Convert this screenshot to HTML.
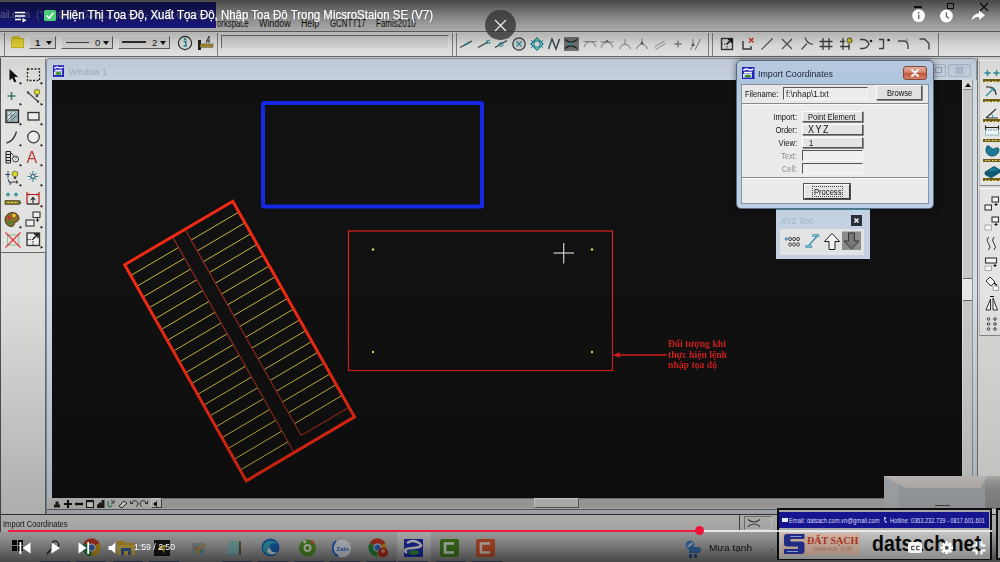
<!DOCTYPE html>
<html><head><meta charset="utf-8">
<style>
*{box-sizing:border-box;margin:0;padding:0}
html,body{width:1000px;height:562px;overflow:hidden;background:#c9c9c7;font-family:"Liberation Sans",sans-serif}
#root{position:relative;width:1000px;height:562px;overflow:hidden;background:#d6d6d4}
.abs{position:absolute}
#root div,#root span,#root svg{position:absolute}
#menubar{left:0;top:0;width:1000px;height:31px;background:#f0f0f0}
#titleblue{left:0;top:2px;width:216px;height:26px;background:#2424b4}
#toolbar{left:0;top:31px;width:1000px;height:26px;background:#f3f3f1;border-top:1px solid #7a7a7a;border-bottom:1px solid #6a6a6a;box-shadow:inset 0 1px 0 #fafafa}
#leftpal{left:0;top:59px;width:46px;height:456px;background:#dededc;border-right:1px solid #707070}
#win{left:46px;top:58px;width:931px;height:456px;background:#cbd5e2;border:1px solid #8a96a4;border-radius:4px 4px 0 0}
#canvas{left:52px;top:80px;width:910px;height:417.500px;background:#111111}
#vscroll{left:962px;top:80px;width:11px;height:417.500px;background:linear-gradient(#c8c8c8 0,#c8c8c8 220px,#e0e0e0 400px);border-left:1px solid #e8e8e8;border-right:1px solid #999}
#hscroll{left:52px;top:495px;width:921px;height:13px;background:#cfcfcf;border-top:1px solid #888}
#rightpal{left:976px;top:58px;width:24px;height:440px;background:#e0e0de;border-left:1px solid #999}
#status{left:0;top:514.500px;width:1000px;height:18px;background:#dadad8}
#taskbar{left:0;top:532px;width:1000px;height:30px;background:linear-gradient(#cdcdcd,#bfbfbf 10px,#a7a7a7 20px,#909090)}
#topgrad{left:0;top:0;width:1000px;height:110px;background:linear-gradient(to bottom,rgba(0,0,0,.7) 0,rgba(0,0,0,.58) 8px,rgba(0,0,0,.47) 15px,rgba(0,0,0,.38) 22px,rgba(0,0,0,.3) 30px,rgba(0,0,0,.12) 45px,rgba(0,0,0,.06) 60px,rgba(0,0,0,.02) 80px,rgba(0,0,0,0) 110px)}
#botgrad{left:0;top:290px;width:1000px;height:272px;background:linear-gradient(to bottom,rgba(0,0,0,0) 0px,rgba(0,0,0,0.036) 40px,rgba(0,0,0,0.1) 110px,rgba(0,0,0,0.153) 160px,rgba(0,0,0,0.207) 210px,rgba(0,0,0,0.225) 230px,rgba(0,0,0,0.27) 245px,rgba(0,0,0,0.36) 258px,rgba(0,0,0,0.46) 268px,rgba(0,0,0,0.5) 272px)}
/* dialog */
#dlg{left:736px;top:60px;width:198px;height:149px;background:linear-gradient(#c3d6ec,#aec6e2 24px,#b7cde6 25px,#bcd0e8);border:1px solid #5b6a80;border-radius:5px;box-shadow:0 0 6px rgba(0,0,0,.5)}
#dlgc{left:741px;top:84px;width:188px;height:120px;background:#ebebeb;border:1px solid #8894a4}
.lbl{font-size:9.5px;color:#111;white-space:nowrap;line-height:11px}
.btn{background:#e4e4e4;border:1px solid;border-color:#fff #555 #555 #fff;box-shadow:1px 1px 0 #888;font-size:9.5px;line-height:10px;color:#111;white-space:nowrap}
.inp{background:#efefef;border:1px solid;border-color:#555 #f8f8f8 #f8f8f8 #555;font-size:9.5px;line-height:10px;color:#222;white-space:nowrap}
.sx{transform:scaleX(.8);transform-origin:0 0;white-space:nowrap}
.sxr{transform:scaleX(.8);transform-origin:100% 0;white-space:nowrap}
.mn{font-size:10px;color:#1a1a1a;white-space:nowrap;transform-origin:0 0;line-height:12px}
.cmb{background:#e6e6e4;border:1px solid;border-color:#fafafa #666 #666 #fafafa}
.cbt{font-size:9.5px;color:#222;line-height:11px}
.tri{width:0;height:0;border-left:3.5px solid transparent;border-right:3.5px solid transparent;border-top:4px solid #111}
</style></head><body>
<div id="root">
<div id="app" style="left:0;top:0;width:1000px;height:562px;filter:blur(.55px)">
 <div id="menubar"></div>
<span class="mn" style="left:216.5px;top:18px;transform:scaleX(0.776)">orkspace</span>
<span class="mn" style="left:259px;top:18px;transform:scaleX(0.888)">Window</span>
<span class="mn" style="left:301.4px;top:18px;transform:scaleX(0.875)">Help</span>
<span class="mn" style="left:329.6px;top:18px;transform:scaleX(0.784)">GCNTT17</span>
<span class="mn" style="left:376.4px;top:18px;transform:scaleX(0.801)">Famis2010</span>
<div style="left:914px;top:6px;width:8px;height:2px;background:#222"></div>
<div style="left:947px;top:3px;width:7px;height:6px;border:1.5px solid #222"></div>
<svg style="left:979px;top:2px" width="10" height="10" viewBox="0 0 10 10"><path d="M1 1l8 8M9 1l-8 8" stroke="#222" stroke-width="1.3"/></svg>
<div id="titleblue"></div>
<span style="left:0;top:8px;font-size:11px;color:#c8ccf4;opacity:.85;white-space:nowrap;transform:scaleX(.86);transform-origin:0 0">ail.com</span>
<span style="left:36px;top:8px;font-size:11px;color:#c0c4f0;opacity:.6;white-space:nowrap;transform:scaleX(.9);transform-origin:0 0">(* Hotline: 0363.232.739 - 0817.601.601</span>
<div id="toolbar"></div>
<div style="left:217px;top:33px;width:2px;height:23px;border-left:1px solid #8a8a8a;border-right:1px solid #f6f6f6"></div>
<div style="left:452px;top:33px;width:2px;height:23px;border-left:1px solid #8a8a8a;border-right:1px solid #f6f6f6"></div>
<div style="left:708px;top:33px;width:2px;height:23px;border-left:1px solid #8a8a8a;border-right:1px solid #f6f6f6"></div>
<div style="left:938px;top:33px;width:2px;height:23px;border-left:1px solid #8a8a8a;border-right:1px solid #f6f6f6"></div>
<div style="left:456px;top:33px;width:2px;height:23px;border-left:1px solid #8a8a8a;border-right:1px solid #f6f6f6"></div>
<div style="left:712px;top:33px;width:2px;height:23px;border-left:1px solid #8a8a8a;border-right:1px solid #f6f6f6"></div>
<div style="left:4px;top:33px;width:2px;height:23px;border-left:1px solid #8a8a8a;border-right:1px solid #f6f6f6"></div>
<div style="left:10.500px;top:37.500px;width:13px;height:10px;background:#f2e23a;border:1px solid #d4c428"></div><div style="left:11.500px;top:36px;width:8px;height:2px;background:#e6d630"></div>
<div class="cmb" style="left:29px;top:36px;width:27px;height:13px"></div><span class="cbt" style="left:35px;top:37px;font-weight:bold">1</span><div class="tri" style="left:46px;top:41px"></div>
<div class="cmb" style="left:61px;top:36px;width:52px;height:13px"></div><div style="left:66px;top:42px;width:23px;height:1px;background:#444"></div><span class="cbt" style="left:95px;top:37px">0</span><div class="tri" style="left:103px;top:41px"></div>
<div class="cmb" style="left:118px;top:36px;width:52px;height:13px"></div><div style="left:122px;top:41px;width:24px;height:2px;background:#333"></div><span class="cbt" style="left:152px;top:37px">2</span><div class="tri" style="left:160px;top:41px"></div>
<svg style="left:177px;top:35px" width="16" height="16" viewBox="0 0 16 16"><circle cx="8" cy="8" r="6.6" fill="#f2f2f2" stroke="#333" stroke-width="1.2"/><path d="M6.6 6.4h2.2v4.6h1.2M6.4 11h3.6" stroke="#1a9a9a" stroke-width="1.5" fill="none"/><circle cx="8" cy="4.2" r="1.1" fill="#1a9a9a"/></svg>
<svg style="left:196px;top:34px" width="18" height="18" viewBox="0 0 18 18"><rect x="2" y="6" width="3" height="10" fill="#222"/><rect x="4" y="10" width="13" height="3.2" fill="#b89a30" stroke="#554" stroke-width=".6"/><path d="M10 9l3-7v7M10 7h4" stroke="#444" stroke-width="1" fill="none"/></svg>
<div style="left:221px;top:35px;width:228px;height:14px;background:#e9e9e7;border:1px solid;border-color:#777 #f8f8f8 #f8f8f8 #777"></div>
<svg style="left:457.0px;top:35.2px" width="18" height="18" viewBox="-9 -9 18 18"><path d="M-6 3.5L6-3" stroke="#3a4650" stroke-width="1.3"/><path d="M-1 2l1-3 1.5 1.5 1-3" stroke="#2a9aa6" stroke-width="1" fill="none"/></svg>
<svg style="left:475.0px;top:35.2px" width="18" height="18" viewBox="-9 -9 18 18"><path d="M-6 3.5L4-2" stroke="#3a4650" stroke-width="1.3"/><path d="M2-2.8l4-1M3-0.8l3.5-.6" stroke="#2a9aa6" stroke-width="1.1" fill="none"/></svg>
<svg style="left:492.0px;top:35.2px" width="18" height="18" viewBox="-9 -9 18 18"><path d="M-6 3.5L6-3.5" stroke="#3a4650" stroke-width="1.3"/><circle cx="0" cy="0.5" r="2" stroke="#2a9aa6" stroke-width="1" fill="none"/></svg>
<svg style="left:510.2px;top:35.2px" width="18" height="18" viewBox="-9 -9 18 18"><circle cx="0" cy="0" r="6.2" stroke="#3a4650" stroke-width="1.3" fill="#e4e4e4"/><path d="M-2.5-2.5l5 5M2.5-2.5l-5 5" stroke="#2a9aa6" stroke-width="1.2"/></svg>
<svg style="left:527.6px;top:35.2px" width="18" height="18" viewBox="-9 -9 18 18"><path d="M0-6L6 0 0 6-6 0z" stroke="#2a9aa6" stroke-width="1.4" fill="none"/><circle cx="0" cy="0" r="3.2" stroke="#2a9aa6" stroke-width="1.3" fill="none"/><path d="M-6-4l2 2M6-4l-2 2M-6 4l2-2M6 4l-2-2" stroke="#2a9aa6" stroke-width="1"/></svg>
<svg style="left:545.0px;top:35.2px" width="18" height="18" viewBox="-9 -9 18 18"><path d="M-5.500 5L-2-5 2 5 5.500-5" stroke="#3a4650" stroke-width="1.4" fill="none"/><path d="M-4.500 2l2-5.500" stroke="#2a9aa6" stroke-width="1"/></svg>
<div style="left:563.500px;top:36.500px;width:15.500px;height:14px;background:#7d7d7d"></div>
<svg style="left:561.5px;top:35.2px" width="18" height="18" viewBox="-9 -9 18 18"><path d="M-6-4.500Q0 1 6-4.500M-6 4.500Q0-1 6 4.500" stroke="#222" stroke-width="1.4" fill="none"/><rect x="-1.500" y="-1.500" width="3" height="3" fill="#2a9aa6"/></svg>
<svg style="left:581.0px;top:35.2px" width="18" height="18" viewBox="-9 -9 18 18"><path d="M-6.500-2.500h13M-6 3q2-5 6-5.500q4 .5 6 5.500" stroke="#969696" stroke-width="1.1" fill="none"/></svg>
<svg style="left:598.0px;top:35.2px" width="18" height="18" viewBox="-9 -9 18 18"><path d="M-6.500-2h13M-6 3.500q2-5 6-5.500q4 .5 6 5.500" stroke="#969696" stroke-width="1.100" fill="none"/><path d="M-2-2l2-2.500 2 2.500z" fill="#666"/></svg>
<svg style="left:616.0px;top:35.2px" width="18" height="18" viewBox="-9 -9 18 18"><path d="M0-5v5M-5.500 5q1-4 5.500-5q4.500 1 5.500 5" stroke="#969696" stroke-width="1.100" fill="none"/></svg>
<svg style="left:632.6px;top:35.2px" width="18" height="18" viewBox="-9 -9 18 18"><path d="M0-5.500v4M-5.500 5q1-4 5.500-5q4.500 1 5.500 5" stroke="#969696" stroke-width="1.100" fill="none"/><path d="M-2 0l2-3 2 3z" fill="#666"/></svg>
<svg style="left:651.0px;top:35.2px" width="18" height="18" viewBox="-9 -9 18 18"><path d="M-5.500 3l10-6M-4.500 5.500l10-6" stroke="#969696" stroke-width="1"/></svg>
<svg style="left:668.5px;top:35.2px" width="18" height="18" viewBox="-9 -9 18 18"><path d="M-3.500 0h7M0-3.500v7" stroke="#858585" stroke-width="1.300"/></svg>
<svg style="left:686.0px;top:35.2px" width="18" height="18" viewBox="-9 -9 18 18"><path d="M-4.500 6l2.500-5v-6M0 6l5.500-11" stroke="#969696" stroke-width="1.100" fill="none"/><path d="M-4 2l2-3.500 2 3.500z" fill="#666"/></svg>
<svg style="left:718.3px;top:35.2px" width="18" height="18" viewBox="-9 -9 18 18"><rect x="-5.500" y="-5.500" width="11" height="11" stroke="#3a3a3a" stroke-width="1.400" fill="#e8e8e8"/><path d="M-5.500 0h5.500v5.500" stroke="#3a3a3a" stroke-width="1" fill="none" stroke-dasharray="1.500 1"/><path d="M0 0l4-4M1-4.500h3.500v3.500" stroke="#111" stroke-width="1.500" fill="none"/></svg>
<svg style="left:739.0px;top:35.2px" width="18" height="18" viewBox="-9 -9 18 18"><path d="M-5-3v8h8v-3" stroke="#3a3a3a" stroke-width="1.400" fill="none"/><path d="M1-6l4.500 4.500M5.500-6l-4.500 4.500" stroke="#e03030" stroke-width="1.300"/></svg>
<svg style="left:758.0px;top:35.2px" width="18" height="18" viewBox="-9 -9 18 18"><path d="M-5.500 5.500l11-11" stroke="#555" stroke-width="1.200"/></svg>
<svg style="left:778.0px;top:35.2px" width="18" height="18" viewBox="-9 -9 18 18"><path d="M-5-5l10 10M5-5l-10 10" stroke="#555" stroke-width="1.200"/></svg>
<svg style="left:797.6px;top:35.2px" width="18" height="18" viewBox="-9 -9 18 18"><path d="M-5.500 5.500l5.500-6M-2-6.500q2 6 8 7" stroke="#555" stroke-width="1.200" fill="none"/></svg>
<svg style="left:817.0px;top:35.2px" width="18" height="18" viewBox="-9 -9 18 18"><path d="M-3-6v12M3-6v12M-6.500-2.500h13M-6.500 2.500h13" stroke="#444" stroke-width="1.300"/></svg>
<svg style="left:838.0px;top:35.2px" width="18" height="18" viewBox="-9 -9 18 18"><path d="M-4-6v12M-7-2.500h5M-7 2.500h10M2 0v6" stroke="#444" stroke-width="1.300"/><circle cx="2.500" cy="-3.500" r="2.600" fill="#d8d820" stroke="#444" stroke-width=".8"/></svg>
<svg style="left:857.4px;top:35.2px" width="18" height="18" viewBox="-9 -9 18 18"><path d="M-6-4.500h3q4 0 6 4.500q-2 4.500-6 4.500h-3" stroke="#444" stroke-width="1.300" fill="none"/><circle cx="5" cy="-3" r="1.300" fill="#222"/></svg>
<svg style="left:876.0px;top:35.2px" width="18" height="18" viewBox="-9 -9 18 18"><path d="M-6-4.500h4.500v9h-4.500" stroke="#444" stroke-width="1.300" fill="none"/><circle cx="3.500" cy="-4" r="1.300" fill="#222"/></svg>
<svg style="left:896.4px;top:35.2px" width="18" height="18" viewBox="-9 -9 18 18"><path d="M-7-3h5q5 0 5 5v3" stroke="#555" stroke-width="1.400" fill="none"/><path d="M2-5.500v3M0.500-4h3" stroke="#aaa" stroke-width=".8"/></svg>
<svg style="left:916.7px;top:35.2px" width="18" height="18" viewBox="-9 -9 18 18"><path d="M-6.500-5h5l4.500 4.500v6" stroke="#555" stroke-width="1.500" fill="none"/></svg>

 <div id="leftpal"></div>
<div style="left:0;top:58px;width:46px;height:195px;background:#e2e2e0;border-top:1px solid #f8f8f8;border-bottom:1px solid #666;border-right:1px solid #8a8a8a;border-left:1px solid #aaa"></div>
<svg style="left:3.3px;top:66.4px" width="20" height="20" viewBox="-10 -10 20 20"><path d="M-3.500-7v11.500l2.800-2.600 2 4.600 2-1-2-4.500h3.800z" fill="#111"/><path d="M6.800 6.300l2 1-2 1z" fill="#111" stroke="#111" stroke-width=".4"/></svg>
<svg style="left:23.7px;top:66.4px" width="20" height="20" viewBox="-10 -10 20 20"><rect x="-6.500" y="-7" width="12" height="11.500" fill="none" stroke="#222" stroke-width="1.300" stroke-dasharray="2 1.500"/><path d="M6.800 6.300l2 1-2 1z" fill="#111" stroke="#111" stroke-width=".4"/></svg>
<svg style="left:3.3px;top:86.8px" width="20" height="20" viewBox="-10 -10 20 20"><path d="M-5.500-1h8M-1.500-5v8" stroke="#3a7a6a" stroke-width="1.500"/><path d="M6.800 6.300l2 1-2 1z" fill="#111" stroke="#111" stroke-width=".4"/></svg>
<svg style="left:23.7px;top:86.8px" width="20" height="20" viewBox="-10 -10 20 20"><path d="M-6-4.500l10 9" stroke="#445" stroke-width="1.200"/><circle cx="-6" cy="-4.500" r="1.200" fill="#445"/><circle cx="4" cy="4.500" r="1.200" fill="#445"/><circle cx="3" cy="-5" r="2.800" fill="#dcdc20" stroke="#554" stroke-width=".7"/><rect x="1.800" y="-2.200" width="2.400" height="2.200" fill="#444"/><path d="M6.800 6.300l2 1-2 1z" fill="#111" stroke="#111" stroke-width=".4"/></svg>
<svg style="left:3.3px;top:107.3px" width="20" height="20" viewBox="-10 -10 20 20"><rect x="-7" y="-7" width="12.500" height="12.500" fill="#9ab0b0" stroke="#222" stroke-width="1.300"/><path d="M-4 3v-7h7" stroke="#fff" stroke-width="1.200" fill="none"/><path d="M-6 4l9-9M-6 0l5-5M-2 4l6-6" stroke="#345" stroke-width=".7"/><path d="M6.800 6.300l2 1-2 1z" fill="#111" stroke="#111" stroke-width=".4"/></svg>
<svg style="left:23.7px;top:107.3px" width="20" height="20" viewBox="-10 -10 20 20"><rect x="-6" y="-4.500" width="11" height="7.500" fill="#ececec" stroke="#333" stroke-width="1.300"/><path d="M6.800 6.300l2 1-2 1z" fill="#111" stroke="#111" stroke-width=".4"/></svg>
<svg style="left:3.3px;top:127.7px" width="20" height="20" viewBox="-10 -10 20 20"><path d="M-6.500 5q7.500-2 10-11.500" stroke="#333" stroke-width="1.300" fill="none"/><path d="M6.800 6.300l2 1-2 1z" fill="#111" stroke="#111" stroke-width=".4"/></svg>
<svg style="left:23.7px;top:127.7px" width="20" height="20" viewBox="-10 -10 20 20"><circle cx="-.5" cy="-1" r="5.800" fill="#ececec" stroke="#333" stroke-width="1.200"/><path d="M6.800 6.300l2 1-2 1z" fill="#111" stroke="#111" stroke-width=".4"/></svg>
<svg style="left:3.3px;top:147.5px" width="20" height="20" viewBox="-10 -10 20 20"><path d="M-7-6.500h4.500v11.500h-4.500zM-7-3.500h4.500M-7-.5h4.500M-7 2.500h4.500" stroke="#222" stroke-width="1" fill="#ddd"/><path d="M-2.500-5.500l3 3" stroke="#222" stroke-width="1"/><circle cx="2.500" cy="1" r="3" fill="#f4f4f4" stroke="#222" stroke-width=".9"/><text x="1.300" y="2.800" font-size="4.500" font-family="Liberation Sans,sans-serif" fill="#222">?</text><path d="M6.800 6.300l2 1-2 1z" fill="#111" stroke="#111" stroke-width=".4"/></svg>
<svg style="left:23.7px;top:147.5px" width="20" height="20" viewBox="-10 -10 20 20"><text x="-7.500" y="5" font-size="16" font-family="Liberation Sans,sans-serif" fill="#b83a3a">A</text><path d="M6.800 6.300l2 1-2 1z" fill="#111" stroke="#111" stroke-width=".4"/></svg>
<svg style="left:3.3px;top:167.5px" width="20" height="20" viewBox="-10 -10 20 20"><path d="M-5-7v7M-8-3.500h5M-5 1q0 4 4 4M-3 7v-4" stroke="#345" stroke-width="1" fill="none" /><circle cx="2" cy="-4" r="2.800" fill="#dcdc20" stroke="#554" stroke-width=".7"/><rect x=".8" y="-1.200" width="2.400" height="2.200" fill="#444"/><path d="M-1 4h6M3 2.500l2 1.500-2 1.500" stroke="#222" stroke-width=".9" fill="none"/><path d="M6.800 6.300l2 1-2 1z" fill="#111" stroke="#111" stroke-width=".4"/></svg>
<svg style="left:23.7px;top:167.5px" width="20" height="20" viewBox="-10 -10 20 20"><path d="M-6.500-1.500h11M-1-7v11M-4.500-5l7 7M2.500-5l-7 7" stroke="#2a8a96" stroke-width="1"/><circle cx="-1" cy="-1.500" r="2" fill="#e8e8e8" stroke="#345" stroke-width="1"/><path d="M6.800 6.300l2 1-2 1z" fill="#111" stroke="#111" stroke-width=".4"/></svg>
<svg style="left:3.3px;top:188.7px" width="20" height="20" viewBox="-10 -10 20 20"><path d="M-7-4.500h4M-5-6.500v4M1-4.500h4M3-6.500v4" stroke="#2a8a96" stroke-width="1.300"/><rect x="-8" y="1.500" width="14.500" height="4" fill="#8a7a20" stroke="#443" stroke-width=".7"/><path d="M-5.500 3.500h2M-2 3.500h2M1.500 3.500h2" stroke="#e8e060" stroke-width="1"/><path d="M6.500 1.500l2 2-2 2z" fill="#443"/></svg>
<svg style="left:23.7px;top:188.7px" width="20" height="20" viewBox="-10 -10 20 20"><path d="M-7-7v12M5-7v12" stroke="#b02020" stroke-width="1.200"/><path d="M-7-4.500h12" stroke="#b02020" stroke-width="1"/><path d="M-7-4.500l2.500-1.300v2.600zM5-4.500l-2.500-1.300v2.600z" fill="#b02020"/><path d="M-7 5h12" stroke="#222" stroke-width="1.300"/><path d="M-1 4v-5M-3 1l2-2.500 2 2.500" stroke="#222" stroke-width="1.100" fill="none"/><path d="M6.800 6.300l2 1-2 1z" fill="#111" stroke="#111" stroke-width=".4"/></svg>
<svg style="left:3.3px;top:210.2px" width="20" height="20" viewBox="-10 -10 20 20"><path d="M-1-7.500c5 0 7 3 7 6s-3 3-4 4 0 4-4 4-6-4-6-7 3-7 7-7z" fill="#8a6a28" stroke="#332" stroke-width=".9"/><circle cx="-3.500" cy="-2.500" r="1.700" fill="#d03030"/><circle cx="1" cy="-4.500" r="1.700" fill="#e8d030"/><circle cx="-3" cy="2.500" r="1.900" fill="#3a8a3a"/><path d="M6.800 6.300l2 1-2 1z" fill="#111" stroke="#111" stroke-width=".4"/></svg>
<svg style="left:23.7px;top:210.2px" width="20" height="20" viewBox="-10 -10 20 20"><rect x="-1" y="-8" width="7" height="5.500" fill="#eee" stroke="#333" stroke-width="1.100"/><rect x="-8" y="0" width="8" height="6" fill="#eee" stroke="#333" stroke-width="1.100"/><path d="M3.500-2v3.500M2-0.500l1.500 2 1.500-2" stroke="#222" stroke-width="1" fill="none"/><path d="M6.800 6.300l2 1-2 1z" fill="#111" stroke="#111" stroke-width=".4"/></svg>
<svg style="left:3.3px;top:229.8px" width="20" height="20" viewBox="-10 -10 20 20"><rect x="-5.500" y="-5" width="11" height="10" fill="none" stroke="#9ac0a0" stroke-width="1.200"/><path d="M-7.500-7.500l15 15M7.500-7.500l-15 15" stroke="#e03a3a" stroke-width="1.300"/></svg>
<svg style="left:23.7px;top:229.8px" width="20" height="20" viewBox="-10 -10 20 20"><rect x="-7" y="-7" width="12.500" height="12.500" stroke="#333" stroke-width="1.300" fill="#ececec"/><path d="M-7-.5h6v6" stroke="#333" stroke-width="1" fill="none" stroke-dasharray="1.500 1"/><path d="M-1-1l4.500-4.500M0-6h4v4" stroke="#111" stroke-width="1.400" fill="none"/><path d="M6.800 6.300l2 1-2 1z" fill="#111" stroke="#111" stroke-width=".4"/></svg>

 <div id="win"></div>
 <div style="left:47px;top:80px;width:5px;height:429px;background:#d3dbe6"></div><div style="left:973px;top:80px;width:3.500px;height:429px;background:#d3dbe6"></div>
 <div id="canvas"></div>
 <svg id="draw" style="left:0;top:0" width="1000" height="562" viewBox="0 0 1000 562">
  <rect x="263" y="103" width="219" height="103.5" fill="none" stroke="#1428e6" stroke-width="4" rx="1"/>
<g stroke="#c9b93a" stroke-width="1" fill="none"><line x1="130.8" y1="275.5" x2="178.6" y2="247.4"/><line x1="191.1" y1="240.1" x2="238.9" y2="212.0"/><line x1="136.9" y1="286.3" x2="184.6" y2="258.2"/><line x1="197.2" y1="250.9" x2="245.0" y2="222.8"/><line x1="142.9" y1="297.1" x2="190.7" y2="269.0"/><line x1="203.3" y1="261.7" x2="251.1" y2="233.6"/><line x1="149.0" y1="307.9" x2="196.8" y2="279.8"/><line x1="209.4" y1="272.5" x2="257.1" y2="244.3"/><line x1="155.1" y1="318.8" x2="202.9" y2="290.6"/><line x1="215.4" y1="283.2" x2="263.2" y2="255.1"/><line x1="161.2" y1="329.6" x2="209.0" y2="301.4"/><line x1="221.5" y1="294.0" x2="269.3" y2="265.9"/><line x1="167.3" y1="340.4" x2="215.1" y2="312.2"/><line x1="227.6" y1="304.8" x2="275.4" y2="276.7"/><line x1="173.3" y1="351.2" x2="221.1" y2="323.0"/><line x1="233.7" y1="315.6" x2="281.5" y2="287.5"/><line x1="179.4" y1="362.0" x2="227.2" y2="333.8"/><line x1="239.8" y1="326.4" x2="287.6" y2="298.3"/><line x1="185.5" y1="372.8" x2="233.3" y2="344.6"/><line x1="245.8" y1="337.2" x2="293.6" y2="309.0"/><line x1="191.6" y1="383.6" x2="239.4" y2="355.4"/><line x1="251.9" y1="348.0" x2="299.7" y2="319.8"/><line x1="197.7" y1="394.4" x2="245.5" y2="366.2"/><line x1="258.0" y1="358.8" x2="305.8" y2="330.6"/><line x1="203.7" y1="405.2" x2="251.5" y2="377.0"/><line x1="264.1" y1="369.6" x2="311.9" y2="341.4"/><line x1="209.8" y1="416.0" x2="257.6" y2="387.8"/><line x1="270.2" y1="380.4" x2="318.0" y2="352.2"/><line x1="215.9" y1="426.8" x2="263.7" y2="398.6"/><line x1="276.3" y1="391.2" x2="324.1" y2="363.0"/><line x1="222.0" y1="437.7" x2="269.8" y2="409.4"/><line x1="282.3" y1="402.0" x2="330.2" y2="373.8"/><line x1="228.1" y1="448.5" x2="275.9" y2="420.2"/><line x1="288.4" y1="412.8" x2="336.2" y2="384.5"/><line x1="234.1" y1="459.3" x2="282.0" y2="431.0"/><line x1="294.5" y1="423.6" x2="342.3" y2="395.3"/><line x1="240.2" y1="470.1" x2="288.0" y2="441.8"/></g>
<g stroke="#9a2a1c" stroke-width="1.1" fill="none"><line x1="172.5" y1="236.6" x2="294.1" y2="452.6"/><polyline points="185.0,229.3 301.2,435.5 347.4,408.2"/></g>
<polygon points="124.7,264.7 232.8,201.2 354.5,416.9 246.3,480.9" fill="none" stroke="#ee2a12" stroke-width="3" stroke-linejoin="miter"/>

  <rect x="348.5" y="231" width="264" height="139.5" fill="none" stroke="#dc2222" stroke-width="1.2"/>
  <g fill="#d8d860"><circle cx="373" cy="249.5" r="1.2"/><circle cx="592" cy="249.5" r="1.2"/><circle cx="373" cy="352" r="1.2"/><circle cx="592" cy="352" r="1.2"/></g>
  <g stroke="#d0d0d0" stroke-width="1.2"><line x1="553.5" y1="253" x2="574" y2="253"/><line x1="563.7" y1="243" x2="563.7" y2="263.5"/></g>
  <line x1="616" y1="355" x2="666.5" y2="355" stroke="#dc2222" stroke-width="1.3"/>
  <polygon points="612.8,355 619.6,352.3 619.6,357.7" fill="#dc2222"/>
  <g font-family="'Liberation Serif',serif" font-weight="bold" font-size="9.3" fill="#d42020">
   <text x="668" y="347.2" textLength="58" lengthAdjust="spacingAndGlyphs">Đối tượng khi</text>
   <text x="668" y="357.5" textLength="59" lengthAdjust="spacingAndGlyphs">thực hiện lệnh</text>
   <text x="668" y="367.8" textLength="49" lengthAdjust="spacingAndGlyphs">nhập tọa độ</text>
  </g>
 </svg>
 <div id="vscroll"></div>
<div style="left:977px;top:58px;width:23px;height:457px;background:linear-gradient(#dcdcda 0,#dcdcda 280px,#f0f0ee 440px);border-left:1px solid #777"></div>
<div style="left:979px;top:60px;width:22px;height:126px;background:#e4e4e2;border:1px solid;border-color:#fafafa #999 #888 #bbb"></div>
<div style="left:979px;top:188px;width:22px;height:148px;background:#e4e4e2;border:1px solid;border-color:#fafafa #999 #888 #bbb"></div>
<div style="left:983px;top:79.0px;width:18px;height:3.400px;background:#6e5e1a"></div><div style="left:985px;top:80.5px;width:16px;height:1px;background:repeating-linear-gradient(90deg,#d8cc60 0 2px,#6e5e1a 2px 3.500px)"></div>
<div style="left:983px;top:99.0px;width:18px;height:3.400px;background:#6e5e1a"></div><div style="left:985px;top:100.5px;width:16px;height:1px;background:repeating-linear-gradient(90deg,#d8cc60 0 2px,#6e5e1a 2px 3.500px)"></div>
<div style="left:983px;top:119.0px;width:18px;height:3.400px;background:#6e5e1a"></div><div style="left:985px;top:120.5px;width:16px;height:1px;background:repeating-linear-gradient(90deg,#d8cc60 0 2px,#6e5e1a 2px 3.500px)"></div>
<div style="left:983px;top:138.6px;width:18px;height:3.400px;background:#6e5e1a"></div><div style="left:985px;top:140.1px;width:16px;height:1px;background:repeating-linear-gradient(90deg,#d8cc60 0 2px,#6e5e1a 2px 3.500px)"></div>
<div style="left:983px;top:158.6px;width:18px;height:3.400px;background:#6e5e1a"></div><div style="left:985px;top:160.1px;width:16px;height:1px;background:repeating-linear-gradient(90deg,#d8cc60 0 2px,#6e5e1a 2px 3.500px)"></div>
<div style="left:983px;top:178.0px;width:18px;height:3.400px;background:#6e5e1a"></div><div style="left:985px;top:179.5px;width:16px;height:1px;background:repeating-linear-gradient(90deg,#d8cc60 0 2px,#6e5e1a 2px 3.500px)"></div>
<svg style="left:981.5px;top:62.5px" width="20" height="20" viewBox="-10 -10 20 20"><path d="M-7.500 0h6M-4.500-3v6M1.500 0h6M4.500-3v6" stroke="#2a8a96" stroke-width="1.400"/></svg>
<svg style="left:981.5px;top:82.0px" width="20" height="20" viewBox="-10 -10 20 20"><path d="M-6-5q10-1 10 8" stroke="#333" stroke-width="1.100" fill="none"/><path d="M-6 4l8-8M2-4l-3.500.5M2-4l-.5 3.500" stroke="#2a8a96" stroke-width="1.100" fill="none"/></svg>
<svg style="left:981.5px;top:102.5px" width="20" height="20" viewBox="-10 -10 20 20"><path d="M-6 5h12M-6 5l10-9" stroke="#333" stroke-width="1.100" fill="none"/><path d="M1 5q0-3-2-4.500" stroke="#2a8a96" stroke-width="1" fill="none"/></svg>
<svg style="left:981.5px;top:121.0px" width="20" height="20" viewBox="-10 -10 20 20"><path d="M-6.500-3.500h13M-6.500-5.500v4M6.500-5.500v4" stroke="#222" stroke-width="1.100"/><rect x="-6.500" y="-1" width="13" height="5" fill="#eef4f8" stroke="#2a8a96" stroke-width=".8" stroke-dasharray="1.500 1"/></svg>
<svg style="left:981.5px;top:142.0px" width="20" height="20" viewBox="-10 -10 20 20"><path d="M-5-6c3-1 4 3 6 3s3-2 5-1 1 6-3 7.500-7 0-8.500-3 .5-6 .5-6.500z" fill="#1a7a96" stroke="#0a4a60" stroke-width=".8"/></svg>
<svg style="left:981.5px;top:162.0px" width="20" height="20" viewBox="-10 -10 20 20"><path d="M-7 0l9-5.500 6 3.500-9 5.500z" fill="#1a7a96" stroke="#0a4a60" stroke-width=".8"/><path d="M-7 0v2.500l6 3.500 9-5.500v-2.500" fill="#0e5a72" stroke="#0a4a60" stroke-width=".6"/></svg>
<svg style="left:981.5px;top:194.4px" width="20" height="20" viewBox="-10 -10 20 20"><rect x="0" y="-7" width="6.500" height="5" fill="#f4f4f4" stroke="#333" stroke-width="1.100"/><rect x="-7" y="1" width="6.500" height="5" fill="#f4f4f4" stroke="#333" stroke-width="1.100"/><path d="M4-1v3M2.500 0.500h3" stroke="#111" stroke-width="1"/></svg>
<svg style="left:981.5px;top:214.4px" width="20" height="20" viewBox="-10 -10 20 20"><rect x="0" y="-7" width="6.500" height="5" fill="#f4f4f4" stroke="#333" stroke-width="1.100"/><rect x="-7" y="1" width="6.500" height="5" fill="#f4f4f4" stroke="#aaa" stroke-width="1"/><path d="M4-1v3M2.500 0.500h3" stroke="#111" stroke-width="1"/></svg>
<svg style="left:981.5px;top:234.4px" width="20" height="20" viewBox="-10 -10 20 20"><path d="M-3.500-7q-3 3 0 6.500t0 6.500M2-7q-3 3 0 6.500t0 6.500" stroke="#333" stroke-width="1" fill="none"/></svg>
<svg style="left:981.5px;top:254.4px" width="20" height="20" viewBox="-10 -10 20 20"><rect x="-6.500" y="-6" width="11" height="5" fill="#f4f4f4" stroke="#333" stroke-width="1.100"/><rect x="-7" y="2" width="6.500" height="4.500" fill="#f4f4f4" stroke="#aaa" stroke-width="1"/><path d="M3 0v3M1.500 1.500h3" stroke="#111" stroke-width="1"/></svg>
<svg style="left:981.5px;top:273.6px" width="20" height="20" viewBox="-10 -10 20 20"><path d="M-6-3l4-4 5 5-4 4z" fill="#f4f4f4" stroke="#333" stroke-width="1"/><rect x="1" y="2" width="5.500" height="4.500" fill="#f4f4f4" stroke="#aaa" stroke-width="1"/><path d="M2-1l3 2.500" stroke="#111" stroke-width="1.200"/></svg>
<svg style="left:981.5px;top:293.6px" width="20" height="20" viewBox="-10 -10 20 20"><path d="M-6 6l4.500-11v11zM1-6l4.500 12h-4.500z" fill="#f4f4f4" stroke="#333" stroke-width="1"/><path d="M-2-7.500h4" stroke="#111" stroke-width="1"/></svg>
<svg style="left:981.5px;top:313.6px" width="20" height="20" viewBox="-10 -10 20 20"><g fill="none" stroke="#333" stroke-width=".9"><circle cx="-3.500" cy="-5" r="1.300"/><circle cx="3" cy="-5" r="1.300"/><circle cx="-3.500" cy="0" r="1.300"/><circle cx="3" cy="0" r="1.300"/><circle cx="-3.500" cy="5" r="1.300"/><circle cx="3" cy="5" r="1.300"/></g></svg>

<svg style="left:52.800px;top:65px" width="11.500" height="12" viewBox="0 0 12 12"><rect x="0" y="0" width="12" height="12" fill="#2626c8"/><path d="M1.200 3.200q2.500-1.800 5-.8t4.600-.6M2 5.400h8.400" stroke="#fff" stroke-width="1.500" fill="none"/><path d="M1 6.500h10v4h-10z" fill="#f4f4fa"/><path d="M9.500 4.500h2v7h-2z" fill="#2626c8"/><ellipse cx="5.600" cy="8.600" rx="3.200" ry="1.500" fill="#3e9a2a"/><path d="M0 11h12" stroke="#2626c8" stroke-width="1.600"/></svg>
<span class="sx" style="left:68.500px;top:65.500px;font-size:9px;line-height:12px;color:#a4afbe;transform:scaleX(.96)">Window 1</span>
<div style="left:927px;top:64px;width:19px;height:13px;border:1px solid #aab6c6;border-radius:2px;background:#c6d2e2"></div>
<div style="left:935px;top:67px;width:7px;height:6px;border:1.500px solid #8fa0b8"></div>
<div style="left:948px;top:64px;width:23px;height:13px;border:1px solid #aab6c6;border-radius:2px;background:#c6d2e2"></div>
<svg style="left:954px;top:66px" width="11" height="9" viewBox="0 0 11 9"><path d="M2 1l7 7M9 1l-7 7" stroke="#8fa0b8" stroke-width="2.600"/><path d="M2 1l7 7M9 1l-7 7" stroke="#e8eef6" stroke-width="1"/></svg>
<div style="left:963px;top:80px;width:9px;height:10px;background:#dcdcdc;border-bottom:1px solid #888"></div>
<div style="left:964.500px;top:83px;width:0;height:0;border-left:3px solid transparent;border-right:3px solid transparent;border-bottom:4px solid #111"></div>
<div style="left:963px;top:278px;width:9px;height:23px;background:#e6e6e6;border-top:1px solid #666;border-bottom:1px solid #666"></div>
<div style="left:48px;top:497.500px;width:925px;height:11px;background:#d2d2d2"></div>
<div style="left:162px;top:498px;width:800px;height:10px;background:#bcbcbc;border-top:1px solid #8a8a8a"></div>
<div style="left:534px;top:498px;width:45px;height:10px;background:#d6d6d6;border:1px solid;border-color:#f4f4f4 #666 #666 #f4f4f4"></div>
<div style="left:150.500px;top:498px;width:11px;height:10px;background:#dcdcdc;border:1px solid;border-color:#f4f4f4 #555 #555 #f4f4f4"></div>
<div style="left:153px;top:500.500px;width:0;height:0;border-top:3px solid transparent;border-bottom:3px solid transparent;border-right:4px solid #111"></div>
<svg style="left:51.0px;top:497.6px" width="12" height="12" viewBox="-6 -6 12 12"><path d="M-3 3.500h6v-3h-1.500v-3h-3v3h-1.500z" fill="#222"/></svg>
<svg style="left:62.0px;top:497.6px" width="12" height="12" viewBox="-6 -6 12 12"><path d="M-4 0h8M0-4v8" stroke="#111" stroke-width="2.200"/></svg>
<svg style="left:73.0px;top:497.6px" width="12" height="12" viewBox="-6 -6 12 12"><path d="M-4 0h8" stroke="#111" stroke-width="2.400"/></svg>
<svg style="left:83.5px;top:497.6px" width="12" height="12" viewBox="-6 -6 12 12"><rect x="-3.500" y="-3.500" width="7" height="7" fill="#eee" stroke="#222" stroke-width="1.100"/><path d="M-3.500-2.500h7" stroke="#222" stroke-width="1.400"/></svg>
<svg style="left:95.0px;top:497.6px" width="12" height="12" viewBox="-6 -6 12 12"><path d="M-4 4v-3l2-1.500v-1.500l2.500 1v-3h3v8z" fill="#222"/></svg>
<svg style="left:105.4px;top:497.6px" width="12" height="12" viewBox="-6 -6 12 12"><path d="M-3-3v4q0 2 2 2t2-2" stroke="#1a7a5a" stroke-width="1" fill="none"/><path d="M0-4l3 3M3-4v3h-3" stroke="#345" stroke-width=".9" fill="none"/></svg>
<svg style="left:116.5px;top:497.6px" width="12" height="12" viewBox="-6 -6 12 12"><path d="M-4 2l5-5 3 2-5 5z" fill="#eee" stroke="#333" stroke-width="1"/></svg>
<svg style="left:127.6px;top:497.6px" width="12" height="12" viewBox="-6 -6 12 12"><path d="M2 2.500a3 3 0 1 0-4-3.500M-3.500-3v2.500h2.500" stroke="#333" stroke-width="1" fill="none"/></svg>
<svg style="left:138.4px;top:497.6px" width="12" height="12" viewBox="-6 -6 12 12"><path d="M-2 2.500a3 3 0 1 1 4-3.500M3.500-3v2.500h-2.500" stroke="#333" stroke-width="1" fill="none"/></svg>
<div style="left:47px;top:508.500px;width:930px;height:6px;background:#c4ccd6;border-top:1px solid #6a6a6a;border-bottom:1px solid #555"></div>
<div id="status"></div><div style="left:0;top:513.800px;width:1000px;height:1.200px;background:#3c3c3c"></div><div style="left:0;top:58px;width:1.200px;height:504px;background:#555"></div>
<span class="sx" style="left:2.500px;top:518px;font-size:9.500px;line-height:11px;color:#1a1a1a">Import Coordinates</span>
<div style="left:739px;top:515px;width:1px;height:18px;background:#555"></div>
<div style="left:744px;top:516px;width:28px;height:14px;border:1px solid;border-color:#888 #f4f4f4 #f4f4f4 #888"></div>
<svg style="left:746px;top:518px" width="16" height="10" viewBox="0 0 16 10"><path d="M2 1.500Q8 6.500 14 1.500M2 8.500Q8 3.500 14 8.500" stroke="#444" stroke-width="1.100" fill="none"/></svg>
<div id="taskbar"></div>
<div style="left:397px;top:532px;width:34px;height:30px;background:linear-gradient(#e2e2e2,#cecece 15px,#a4a4a4)"></div>
<svg style="left:12px;top:540px" width="11" height="11" viewBox="0 0 11 11"><rect x="0" y="0" width="5" height="5" fill="#0a0a0a"/><rect x="6" y="0" width="5" height="5" fill="#0a0a0a"/><rect x="0" y="6" width="5" height="5" fill="#0a0a0a"/><rect x="6" y="6" width="5" height="5" fill="#0a0a0a"/></svg>
<svg style="left:46px;top:540px" width="14" height="15" viewBox="0 0 14 15"><circle cx="9" cy="5" r="3.800" fill="none" stroke="#222" stroke-width="1.200"/><path d="M6 8l-5 6" stroke="#222" stroke-width="1.400"/></svg>
<svg style="left:82px;top:538px" width="19" height="19" viewBox="0 0 19 19"><circle cx="9.500" cy="9.500" r="9" fill="#d8a020"/><path d="M9.500 9.500L1.700 5a9 9 0 0 1 15.600 0z" fill="#c83a28"/><path d="M9.500 9.500L1.700 5a9 9 0 0 0 7.800 13.500z" fill="#2a8a44"/><circle cx="9.500" cy="9.500" r="4" fill="#e8e8e8"/><circle cx="9.500" cy="9.500" r="3.100" fill="#3a6ad0"/></svg>
<svg style="left:116px;top:538px" width="20" height="18" viewBox="0 0 20 18"><path d="M1 3h7l2 2h9v12h-18z" fill="#d8a828"/><rect x="1" y="7" width="18" height="10" fill="#e6c050"/><rect x="5" y="10" width="10" height="7" fill="#3a6aa8"/><rect x="8" y="13" width="4" height="4" fill="#e6c050"/></svg>
<svg style="left:154px;top:540px" width="16" height="16" viewBox="0 0 16 16"><rect x="0" y="0" width="16" height="16" fill="#1a1a1a"/><path d="M5 6l8-1-3 4 1 5-3-4-4 0z" fill="#c8a820"/></svg>
<svg style="left:190px;top:539px" width="18" height="18" viewBox="0 0 18 18"><rect x="2" y="4" width="13" height="12" rx="2" fill="#8aa6b0"/><path d="M4 14l9-11 3 2-9 11z" fill="#b8a070"/><circle cx="6" cy="9" r="2" fill="#c87a50"/><circle cx="11" cy="12" r="2" fill="#6a9a6a"/></svg>
<svg style="left:225px;top:539px" width="18" height="18" viewBox="0 0 18 18"><path d="M5 2h11v14h-14z" fill="#6aa8a8"/><path d="M5 2h9l-1 13h-11z" fill="#8ac4c4"/><path d="M14 2l2 1v13h-2z" fill="#7a5a3a"/></svg>
<svg style="left:261px;top:538px" width="19" height="19" viewBox="0 0 19 19"><circle cx="9.500" cy="9.500" r="9" fill="#1a6ac0"/><path d="M2 12a8 8 0 0 1 15-5c-3-3-9-2-9 3 0 3 3 5 7 4a8 8 0 0 1-13-2z" fill="#3ab0c8"/><path d="M9 9c0 4 3 6 7 5-2 3-8 4-10-1z" fill="#e8f0f8"/></svg>
<svg style="left:298px;top:538px" width="19" height="19" viewBox="0 0 19 19"><circle cx="9.500" cy="10" r="8.500" fill="#5a9a28"/><circle cx="9.500" cy="10" r="4" fill="#e8f0e0"/><circle cx="9.500" cy="10" r="2" fill="#5a9a28"/><path d="M13 2l4 2-3 3z" fill="#e85a3a"/><path d="M5 2l4 1-3 3z" fill="#e8f0e0"/></svg>
<svg style="left:332px;top:539px" width="20" height="19" viewBox="0 0 20 19"><circle cx="10" cy="9.500" r="9" fill="#e8eef4"/><path d="M4 2a9 9 0 0 0 2 15" stroke="#2a6ad0" stroke-width="2" fill="none"/><text x="4.500" y="12" font-size="6" font-family="Liberation Sans,sans-serif" font-weight="bold" fill="#2a6ad0">Zalo</text></svg>
<svg style="left:368px;top:538px" width="21" height="20" viewBox="0 0 21 20"><circle cx="9.500" cy="9.500" r="9" fill="#d8a020"/><path d="M9.500 9.500L1.700 5a9 9 0 0 1 15.600 0z" fill="#c83a28"/><path d="M9.500 9.500L1.700 5a9 9 0 0 0 7.800 13.500z" fill="#2a8a44"/><circle cx="9.500" cy="9.500" r="4" fill="#e8e8e8"/><circle cx="9.500" cy="9.500" r="3.100" fill="#3a6ad0"/><circle cx="15" cy="14.500" r="5" fill="#b83020"/><circle cx="15" cy="13" r="2" fill="#e0a080"/></svg>
<svg style="left:404px;top:539px" width="19" height="18" viewBox="0 0 19 18"><rect x="0" y="0" width="19" height="18" fill="#2030b8"/><path d="M3 4q6-4 12 0t-6 5t-6 5" stroke="#f0f0f0" stroke-width="2.400" fill="none"/><ellipse cx="10" cy="13.500" rx="5" ry="2.300" fill="#3a9a3a"/></svg>
<svg style="left:440px;top:539px" width="19" height="18" viewBox="0 0 19 18"><rect x="0" y="0" width="19" height="18" rx="2" fill="#4a8a20"/><path d="M14 4.500h-9v9h9" stroke="#e8f0e0" stroke-width="2.600" fill="none"/></svg>
<svg style="left:476px;top:539px" width="19" height="18" viewBox="0 0 19 18"><rect x="0" y="0" width="19" height="18" rx="2" fill="#d85a30"/><path d="M14 4.500h-9v9h9" stroke="#f0e0d8" stroke-width="2.600" fill="none"/></svg>
<div style="left:40px;top:560.500px;width:30px;height:2px;background:#4a5a78"></div>
<div style="left:76px;top:560.500px;width:30px;height:2px;background:#4a5a78"></div>
<div style="left:113px;top:560.500px;width:30px;height:2px;background:#4a5a78"></div>
<div style="left:149px;top:560.500px;width:30px;height:2px;background:#4a5a78"></div>
<div style="left:222px;top:560.500px;width:30px;height:2px;background:#4a5a78"></div>
<div style="left:258px;top:560.500px;width:30px;height:2px;background:#4a5a78"></div>
<div style="left:294px;top:560.500px;width:30px;height:2px;background:#4a5a78"></div>
<div style="left:330px;top:560.500px;width:30px;height:2px;background:#4a5a78"></div>
<div style="left:366px;top:560.500px;width:30px;height:2px;background:#4a5a78"></div>
<div style="left:398px;top:560.500px;width:30px;height:2px;background:#4a5a78"></div>
<div style="left:436px;top:560.500px;width:30px;height:2px;background:#4a5a78"></div>
<div style="left:472px;top:560.500px;width:30px;height:2px;background:#4a5a78"></div>
<svg style="left:683px;top:539px" width="20" height="20" viewBox="0 0 20 20"><circle cx="7" cy="6" r="4.500" fill="#4a86c8"/><path d="M4.500 8l5-4" stroke="#dfe8f0" stroke-width="1.400"/><path d="M6 8h9a3 3 0 0 1 0 6h-9z" fill="#3a76b8"/><rect x="6" y="15" width="3" height="4" fill="#2a5a98"/><rect x="11" y="15" width="3" height="4" fill="#2a5a98"/></svg>
<span style="left:709px;top:542px;font-size:9.500px;line-height:12px;color:#1a1a1a;white-space:nowrap;transform:scaleX(1.057);transform-origin:0 0">Mưa tạnh</span>
<div style="left:770.500px;top:548.500px;width:1.500px;height:1.500px;background:#333"></div>
<div style="left:883.500px;top:475.500px;width:117px;height:33px;background:#b3b9be;overflow:hidden"><div style="left:0;top:0;width:15px;height:33px;background:#bfc3c6"></div><div style="left:101px;top:0;width:16px;height:33px;background:linear-gradient(#c2c2c2,#a2a2a2 40%,#9a9a9a)"></div><div style="left:0;top:0;width:117px;height:3px;background:#cdc9c5"></div><div style="left:0;top:0;width:110px;height:13px;background:linear-gradient(#e0dad6,#d2ccc8);clip-path:polygon(0 0,104px 0,97px 12.500px,22px 12.500px)"></div><div style="left:51px;top:29px;width:15px;height:1.500px;background:#4a4a4a"></div></div>

 <div id="dlg"></div>
 <div id="dlgc"></div>
 <svg style="left:742px;top:66.500px" width="12.500" height="12.500" viewBox="0 0 12 12"><rect x="0" y="0" width="12" height="12" fill="#2626c8"/><path d="M1.200 3.200q2.500-1.800 5-.8t4.600-.6M2 5.400h8.400" stroke="#fff" stroke-width="1.500" fill="none"/><path d="M1 6.500h10v4h-10z" fill="#f4f4fa"/><path d="M9.500 4.500h2v7h-2z" fill="#2626c8"/><ellipse cx="5.600" cy="8.600" rx="3.200" ry="1.500" fill="#3e9a2a"/><path d="M0 11h12" stroke="#2626c8" stroke-width="1.600"/></svg>
 <span class="lbl sx" style="left:757.500px;top:67.500px;font-size:9px;line-height:12px;color:#1c2634;transform:scaleX(.98)">Import Coordinates</span>
 <div id="dlgx" style="left:903px;top:66px;width:24px;height:14px;border-radius:3px;border:1px solid #8a4a3c;background:linear-gradient(#ecb8a8,#dc8870 45%,#cb5a40 50%,#d88266)"></div>
 <svg style="left:910px;top:68px" width="10" height="10" viewBox="0 0 10 10"><path d="M2 2l6 6M8 2l-6 6" stroke="#fff" stroke-width="2" stroke-linecap="round"/></svg>
 <span class="lbl sx" style="left:745px;top:88px">Filename:</span>
 <div class="inp" style="left:783px;top:87px;width:85px;height:13px;"><span class="sx" style="left:2px;top:1px;transform:scaleX(.86)">f:\nhap\1.txt</span></div>
 <div class="btn" style="left:876px;top:85px;width:46px;height:15px;"><span class="sx" style="left:10px;top:2px">Browse</span></div>
 <div style="left:742px;top:103px;width:186px;height:2px;border-top:1px solid #8a8a8a;border-bottom:1px solid #fafafa"></div>
 <span class="lbl sxr" style="left:745px;top:111.200px;width:52px;text-align:right">Import:</span>
 <div class="btn" style="left:802px;top:111px;width:61px;height:11px;"><span class="sx" style="left:5px;top:0">Point Element</span></div>
 <span class="lbl sxr" style="left:745px;top:124.200px;width:52px;text-align:right">Order:</span>
 <div class="btn" style="left:802px;top:124px;width:61px;height:11px;"><span class="sx" style="left:5px;top:0;letter-spacing:1.6px;font-size:10px;transform:scaleX(.9)">XYZ</span></div>
 <span class="lbl sxr" style="left:745px;top:137.200px;width:52px;text-align:right">View:</span>
 <div class="btn" style="left:802px;top:137px;width:61px;height:11px;"><span class="sx" style="left:6px;top:0">1</span></div>
 <span class="lbl sxr" style="left:745px;top:150.200px;width:52px;text-align:right;color:#8e8e8e">Text:</span>
 <div class="inp" style="left:802px;top:150px;width:61px;height:11px"></div>
 <span class="lbl sxr" style="left:745px;top:163.200px;width:52px;text-align:right;color:#8e8e8e">Cell:</span>
 <div class="inp" style="left:802px;top:163px;width:61px;height:11px"></div>
 <div style="left:742px;top:177px;width:186px;height:2px;border-top:1px solid #8a8a8a;border-bottom:1px solid #fafafa"></div>
 <div class="btn" style="left:804px;top:184px;width:46px;height:15px;border-color:#fff #333 #333 #fff;outline:1px solid #555;"><span class="sx" style="left:9px;top:2px">Process</span></div>
 <div style="left:812px;top:186px;width:31px;height:11px;border:1px dotted #444"></div>
 <!-- XYZ Text palette -->
 <div style="left:776px;top:209px;width:94px;height:50px;background:#c3d1e3;border-top:1px solid #3a8a96"></div>
 <span class="lbl sx" style="left:781px;top:215px;color:#a3b3c8;font-size:9.5px;transform:scaleX(.84)">XYZ Text</span>
 <div style="left:851px;top:215px;width:11px;height:11px;background:#2a2f3a"></div>
 <svg style="left:853px;top:217px" width="7" height="7" viewBox="0 0 7 7"><path d="M1.5 1.5l4 4M5.5 1.5l-4 4" stroke="#fff" stroke-width="1.4"/></svg>
 <div style="left:780px;top:229px;width:84px;height:26px;background:#e1e3e5"></div>
 <svg style="left:780px;top:229px" width="84" height="26" viewBox="0 0 84 26">
  <rect x="62" y="2.5" width="19" height="18.5" fill="#8c8c8c"/>
  <g transform="translate(2.500 0)"><g fill="none" stroke="#333" stroke-width="0.9"><ellipse cx="7.6" cy="10" rx="1.4" ry="1.7"/><ellipse cx="11.6" cy="10" rx="1.4" ry="1.7"/><ellipse cx="15.6" cy="10" rx="1.4" ry="1.7"/><ellipse cx="7.6" cy="15.5" rx="1.4" ry="1.7"/><ellipse cx="11.6" cy="15.5" rx="1.4" ry="1.7"/><ellipse cx="15.6" cy="15.5" rx="1.4" ry="1.7"/></g>
  <path d="M2 10h3.6M3.8 8.2v3.6" stroke="#2a7aa0" stroke-width="1.1"/></g>
  <g transform="translate(1.300 0)"><path d="M27 17l9-10" stroke="#3a8aa6" stroke-width="1.2"/><rect x="31.5" y="5.5" width="6" height="2.2" fill="#7fc6d8" stroke="#3a8aa6" stroke-width=".6"/><rect x="24.5" y="16.5" width="6" height="2.2" fill="#7fc6d8" stroke="#3a8aa6" stroke-width=".6"/></g>
  <path d="M52 4.5l7.5 8h-4.5v8h-6v-8h-4.5z" fill="#f4f4f4" stroke="#222" stroke-width="1"/>
  <path d="M71.500 20l7.500 -8h-4.500v-8h-6v8h-4.500z" fill="#777" stroke="#333" stroke-width="1"/>
 </svg>

</div>
 <div id="topgrad"></div>
 <div id="botgrad"></div>
<svg style="left:14px;top:11px" width="14" height="12" viewBox="0 0 14 12"><path d="M1 1.500h10M1 5h10M1 8.500h6" stroke="#fff" stroke-width="1.600"/><path d="M8.500 7l4 2.300-4 2.300z" fill="#fff"/></svg>
<div style="left:44px;top:9.500px;width:12px;height:11px;background:#4ccd7c;border-radius:1.500px"></div>
<svg style="left:44px;top:9.500px" width="12" height="11" viewBox="0 0 12 11"><path d="M2.500 5.500l2.500 2.500 4.500-5" stroke="#fff" stroke-width="1.600" fill="none"/></svg>
<span style="left:61px;top:8px;font-size:12.500px;line-height:15px;color:#fff;white-space:nowrap;transform:scaleX(0.9172);transform-origin:0 0;text-shadow:0 0 2px rgba(0,0,0,.5);-webkit-text-stroke:.25px #fff">Hiện Thị Tọa Độ, Xuất Tọa Độ, Nhập Toa Đô Trong MicsroStaion SE (V7)</span>
<div style="left:485.200px;top:9.800px;width:30.600px;height:30.600px;border-radius:50%;background:rgba(50,50,54,.78)"></div>
<svg style="left:494px;top:19px" width="13" height="13" viewBox="0 0 13 13"><path d="M1 1l11 11M12 1l-11 11" stroke="#e8e8e8" stroke-width="1.300"/></svg>
<svg style="left:910px;top:7px" width="17" height="17" viewBox="0 0 17 17"><circle cx="8.600" cy="8.600" r="6.400" fill="#fff"/><rect x="7.900" y="7.600" width="1.500" height="4.400" fill="#666"/><rect x="7.900" y="5" width="1.500" height="1.500" fill="#666"/></svg>
<svg style="left:938px;top:8px" width="17" height="17" viewBox="0 0 17 17"><circle cx="8.400" cy="8" r="6.400" fill="#fff"/><path d="M8.400 4.200v4.200l2.600 1.800" stroke="#666" stroke-width="1.300" fill="none"/></svg>
<svg style="left:970px;top:9px" width="16" height="14" viewBox="0 0 16 14"><path d="M9 1.500l6 4.800-6 4.800v-3q-5-.3-7.500 3.700q.5-6.500 7.500-7.500z" fill="#fff"/></svg>
<!--LOGO-->
<div style="left:777px;top:508px;width:215px;height:52px;background:#0c0c0c"></div>
<div style="left:779px;top:510px;width:211px;height:48px;background:#a8a8a8"></div>
<div style="left:779px;top:512px;width:209.500px;height:16px;background:#15158f"></div>
<div style="left:782px;top:517.500px;width:5.500px;height:4px;background:#e8e8f4"></div>
<span style="left:788.500px;top:515.500px;font-size:7px;line-height:9px;color:#dcdcf0;white-space:nowrap;transform:scaleX(0.827);transform-origin:0 0">Email: datsach.com.vn@gmail.com</span>
<svg style="left:883px;top:516px" width="6" height="8" viewBox="0 0 6 8"><path d="M1.500 1q-1.500 3 1.500 6l1-1-1.200-1.200-.5.500q-1-1.300-.3-2.300l.7.300.5-1.800z" fill="#e8e8f4"/></svg>
<span style="left:889.500px;top:515.500px;font-size:7px;line-height:9px;color:#dcdcf0;white-space:nowrap;transform:scaleX(0.808);transform-origin:0 0">Hotline: 0363.232.739 - 0817.601.601</span>
<div style="left:779px;top:530.500px;width:211px;height:28px;background:linear-gradient(#c6c6c6,#8c8c8c)"></div>
<div style="left:782px;top:533px;width:78px;height:22px;background:linear-gradient(#d2b4a4,#a88c7e)"></div>
<svg style="left:783.5px;top:534px" width="21" height="20" viewBox="0 0 21 20"><path d="M3 0h17.500v5h-14v2.500h11a3 3 0 0 1 3 3v6.500a3 3 0 0 1-3 3h-17.500v-5h14v-2.500h-11a3 3 0 0 1-3-3v-6.500a3 3 0 0 1 3-3z" fill="#1e2c86"/><path d="M6.500 2.500h11M3 17.500h11" stroke="#8a96c8" stroke-width="1"/></svg>
<span style="left:807px;top:534px;font-family:'Liberation Serif',serif;font-weight:bold;font-size:11px;line-height:13px;color:#a8341e;white-space:nowrap;transform:scaleX(0.911);transform-origin:0 0">ĐẤT SẠCH</span>
<span style="left:814px;top:546.500px;font-size:4.500px;line-height:6px;color:#96603f;white-space:nowrap;transform:scaleX(0.783);transform-origin:0 0">NHANH SẠCH - UY TÍN</span>
<span style="left:872px;top:530.500px;font-weight:bold;font-size:21.500px;line-height:27px;color:#0a0a0a;white-space:nowrap;transform:scaleX(0.912);transform-origin:0 0">datsach.net</span>
<div style="left:996px;top:508px;width:4px;height:52px;background:#0c0c0c"></div><div style="left:998px;top:510px;width:2px;height:48px;background:#9a9a9a"></div>

<!--BOTOV-->
<div style="left:8px;top:529.500px;width:984px;height:2px;background:rgba(240,240,240,.85)"></div>
<div style="left:8px;top:529.500px;width:692px;height:2px;background:#ee1c44"></div>
<div style="left:694.500px;top:525.500px;width:9.600px;height:9.600px;border-radius:50%;background:#f0123c"></div>
<svg style="left:19px;top:542px" width="12" height="12" viewBox="0 0 12 12"><rect x="0.500" y="0" width="1.800" height="12" fill="#fff"/><path d="M11.500 0.500v11l-8-5.500z" fill="#fff"/></svg>
<svg style="left:51px;top:542px" width="10" height="12" viewBox="0 0 10 12"><path d="M0.500 0.500l8.500 5.500-8.500 5.500z" fill="#fff"/></svg>
<svg style="left:78px;top:542px" width="12" height="12" viewBox="0 0 12 12"><path d="M0.500 0.500v11l8-5.500z" fill="#fff"/><rect x="9.300" y="0" width="1.800" height="12" fill="#fff"/></svg>
<svg style="left:108px;top:542px" width="12" height="12" viewBox="0 0 12 12"><path d="M0.500 4h2.800l4-3.500v11l-4-3.500h-2.800z" fill="#fff"/></svg>
<span style="left:133.500px;top:541.500px;font-size:8.700px;line-height:11px;color:#fff;white-space:nowrap;transform:scaleX(0.999);transform-origin:0 0">1:59 / 2:50</span>
<div style="left:908px;top:542px;width:14px;height:11px;background:#f4f4f4;border-radius:2px"></div>
<svg style="left:909.5px;top:544.5px" width="11" height="6" viewBox="0 0 11 6"><path d="M4.500 1.300h-2.300a.6.600 0 0 0-.6.600v2.200a.6.600 0 0 0 .6.600h2.300M9.500 1.300h-2.300a.6.600 0 0 0-.6.600v2.200a.6.600 0 0 0 .6.600h2.300" stroke="#555" stroke-width="1.200" fill="none"/></svg>
<svg style="left:940.300px;top:540.800px" width="13.500" height="13.500" viewBox="0 0 15 15"><g transform="translate(7.500 7.500)"><rect x="-1.600" y="-7" width="3.200" height="4" fill="#fff" transform="rotate(0)"/><rect x="-1.600" y="-7" width="3.200" height="4" fill="#fff" transform="rotate(45)"/><rect x="-1.600" y="-7" width="3.200" height="4" fill="#fff" transform="rotate(90)"/><rect x="-1.600" y="-7" width="3.200" height="4" fill="#fff" transform="rotate(135)"/><rect x="-1.600" y="-7" width="3.200" height="4" fill="#fff" transform="rotate(180)"/><rect x="-1.600" y="-7" width="3.200" height="4" fill="#fff" transform="rotate(225)"/><rect x="-1.600" y="-7" width="3.200" height="4" fill="#fff" transform="rotate(270)"/><rect x="-1.600" y="-7" width="3.200" height="4" fill="#fff" transform="rotate(315)"/><circle r="5" fill="#fff"/><circle r="2.100" fill="#555"/></g></svg>
<svg style="left:972px;top:540.5px" width="14" height="14" viewBox="0 0 14 14"><path d="M4.500 0.500v4h-4M9.500 0.500v4h4M4.500 13.500v-4h-4M9.500 13.500v-4h4" stroke="#fff" stroke-width="2" fill="none"/></svg>

</div>
</body></html>
